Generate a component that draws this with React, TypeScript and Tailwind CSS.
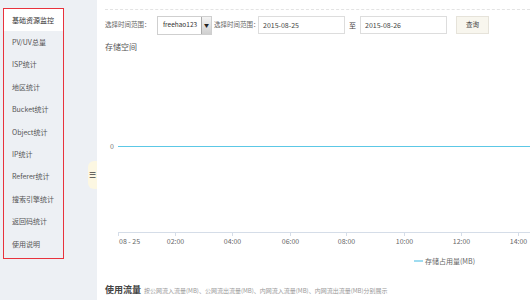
const menu = [
  '基础资源监控',
  'PV/UV总量',
  'ISP统计',
  '地区统计',
  'Bucket统计',
  'Object统计',
  'IP统计',
  'Referer统计',
  '搜索引擎统计',
  '返回码统计',
  '使用说明',
];

const ticks = [
  { x: 13, label: '' },
  { x: 70, label: '02:00' },
  { x: 127, label: '04:00' },
  { x: 185, label: '06:00' },
  { x: 241, label: '08:00' },
  { x: 299, label: '10:00' },
  { x: 356, label: '12:00' },
  { x: 413, label: '14:00' },
];

function Chart() {
  return (
    <svg width="425" height="218" className="block" style={{ fontFamily: '"Noto Sans CJK SC", "Liberation Sans", sans-serif' }}>
      <text x="7" y="97.5" fontSize="7" fill="#777" textAnchor="middle">0</text>
      <line x1="13" y1="95.5" x2="425" y2="95.5" stroke="#5cc8e6" strokeWidth="1" />
      <line x1="13" y1="181.5" x2="425" y2="181.5" stroke="#d5dde8" strokeWidth="1" />
      {ticks.map((t) => (
        <line key={t.x} x1={t.x + 0.5} y1="181" x2={t.x + 0.5} y2="185" stroke="#d5dde8" strokeWidth="1" />
      ))}
      <text x="14" y="192.5" fontSize="7" fill="#666">08 - 25</text>
      {ticks.slice(1).map((t) => (
        <text key={t.label} x={t.x + 0.5} y="192.5" fontSize="7" fill="#666" textAnchor="middle">{t.label}</text>
      ))}
      <line x1="309" y1="210" x2="318" y2="210" stroke="#9fdcf0" strokeWidth="2" />
      <text x="320" y="212.5" fontSize="7" fill="#666">存储占用量(MB)</text>
    </svg>
  );
}

export default function App() {
  return (
    <div
      className="w-[530px] h-[300px] flex overflow-hidden bg-white text-[#555]"
      style={{ fontFamily: '"Noto Sans CJK SC", "Liberation Sans", sans-serif' }}
    >
      {/* Sidebar */}
      <div className="relative w-[97px] shrink-0 bg-[#edf0f4] pt-[8px] pl-[3px]">
        <div className="w-[61px] h-[251px] border border-[#e8323c]">
          {menu.map((m, i) => (
            <div
              key={m}
              className={
                'h-[22.4px] pl-[8px] flex items-center text-[7px] leading-none ' +
                (i === 0 ? 'bg-white text-[#333]' : 'text-[#555]')
              }
            >
              {m}
            </div>
          ))}
        </div>
        <div className="absolute right-0 top-[161px] w-[9px] h-[28px] rounded-l-[6px] bg-[#fcf7e2] flex items-center justify-center">
          <span className="text-[8px] leading-none text-[#444]">☰</span>
        </div>
      </div>

      {/* Main */}
      <div className="flex-1 pl-[8px] pt-[9px]">
        <div className="border-t border-dashed border-[#e3e3e3]" />
        <div className="flex items-center h-[20px] mt-[5px] text-[6.5px] whitespace-nowrap">
          <span className="w-[52px] text-[#666]">选择时间范围：</span>
          <div className="w-[55px] h-[19px] border border-[#cfcfcf] flex items-center bg-white">
            <span className="flex-1 pl-[5px] text-[#333]">freehao123</span>
            <span className="w-[10px] h-full border-l border-[#aaa] bg-gradient-to-b from-[#f4f4f4] to-[#cfcfcf] flex items-center justify-center text-[5px] text-[#222]">▼</span>
          </div>
          <span className="ml-[2px] w-[44px] text-[#666]">选择时间范围：</span>
          <div className="w-[87px] h-[18px] border border-[#ddd] flex items-center pl-[4px] text-[7px] text-[#444]">2015-08-25</div>
          <span className="ml-[4px] text-[7px] text-[#444]">至</span>
          <div className="ml-[4px] w-[87px] h-[18px] border border-[#ddd] flex items-center pl-[4px] text-[7px] text-[#444]">2015-08-26</div>
          <div className="ml-[9px] w-[33px] h-[18px] border border-[#e6e3da] bg-[#f8f6ee] flex items-center justify-center text-[#444]">查询</div>
        </div>
        <div className="mt-[6px] text-[8px] text-[#555]">存储空间</div>
        <div className="mt-[-2px]">
          <Chart />
        </div>
        <div className="flex items-baseline mt-[14px]">
          <span className="text-[9px] text-[#444] font-bold">使用流量</span>
          <span className="ml-[3px] text-[6px] text-[#999]">按公网流入流量(MB)、公网流出流量(MB)、内网流入流量(MB)、内网流出流量(MB)分别展示</span>
        </div>
      </div>
    </div>
  );
}
